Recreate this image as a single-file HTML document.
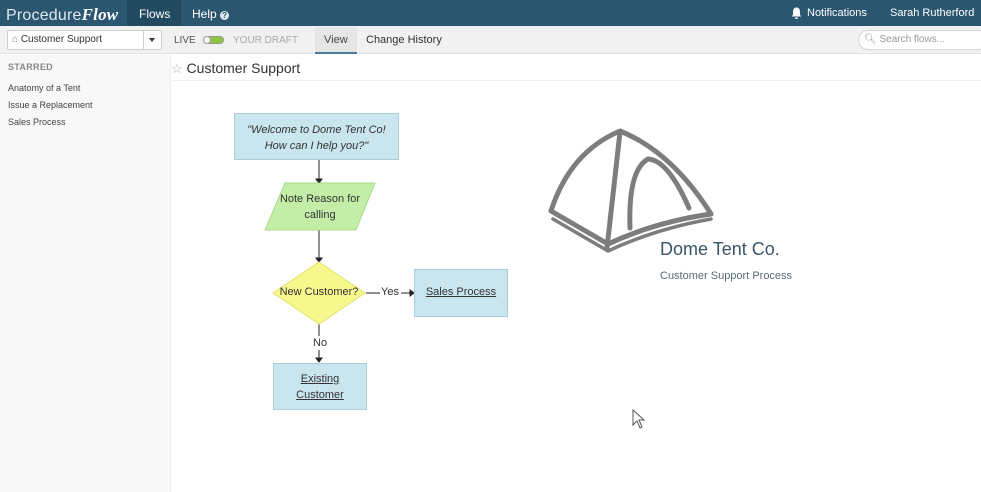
<!DOCTYPE html>
<html><head><meta charset="utf-8"><style>
*{margin:0;padding:0;box-sizing:border-box}
body{width:981px;height:492px;overflow:hidden;background:#fff;font-family:"Liberation Sans",sans-serif;position:relative}
.a{position:absolute}
#top{left:0;top:0;width:981px;height:26px;background:#2b5670}
#bar{left:0;top:26px;width:981px;height:28px;background:#f1f1f1;border-bottom:1px solid #e2e2e2}
#side{left:0;top:55px;width:171px;height:437px;background:#f8f8f8;border-right:1px solid #ececec}
.t{position:absolute;white-space:nowrap}
</style></head><body>
<div id="top" class="a"></div>
<div class="t" style="left:6px;top:5px;font-size:16px;color:#dfe8ee;letter-spacing:0.2px">Procedure<b style="font-family:'Liberation Serif',serif;font-style:italic;font-size:17px;color:#fff">Flow</b></div>
<div class="a" style="left:127px;top:0;width:54px;height:26px;background:#224a61"></div>
<div class="t" style="left:139px;top:7px;font-size:12px;color:#fff">Flows</div>
<div class="t" style="left:192px;top:7px;font-size:12px;color:#fff">Help <span style="display:inline-block;width:9px;height:9px;border-radius:50%;background:#dfe8ee;color:#2b5670;font-size:8px;line-height:9px;text-align:center;font-weight:bold">?</span></div>
<svg class="a" style="left:791px;top:7px" width="11" height="12" viewBox="0 0 11 12"><path d="M5.5 0.5C3 0.5 2 2.5 2 5v3L0.5 9.5h10L9 8V5C9 2.5 8 0.5 5.5 0.5z M4 10.5h3a1.5 1.5 0 0 1-3 0z" fill="#fff"/></svg>
<div class="t" style="left:807px;top:7px;font-size:11px;color:#fff">Notifications</div>
<div class="t" style="left:890px;top:7px;font-size:11px;color:#fff">Sarah Rutherford</div>

<div id="bar" class="a"></div>
<div class="a" style="left:7px;top:30px;width:155px;height:20px;background:#fff;border:1px solid #cfcfcf;border-radius:2px"></div>
<div class="a" style="left:143px;top:30px;width:1px;height:20px;background:#cfcfcf"></div>
<div class="a" style="left:149px;top:38px;border-left:3px solid transparent;border-right:3px solid transparent;border-top:4px solid #333"></div>
<div class="t" style="left:12px;top:34px;font-size:10px;color:#333"><span style="color:#888">⌂</span> Customer Support</div>
<div class="t" style="left:174px;top:35px;font-size:10px;color:#555">LIVE</div>
<div class="a" style="left:203px;top:36px;width:21px;height:8px;border-radius:4px;background:#8cc63f;border:1px solid #999"></div>
<div class="a" style="left:203px;top:36px;width:8px;height:8px;border-radius:50%;background:#fff;border:1px solid #999"></div>
<div class="t" style="left:233px;top:35px;font-size:10px;color:#aaa">YOUR DRAFT</div>
<div class="a" style="left:315px;top:27px;width:42px;height:27px;background:#e6e6e6;border-bottom:2px solid #4a7ea0"></div>
<div class="t" style="left:324px;top:34px;font-size:11px;color:#444">View</div>
<div class="t" style="left:366px;top:34px;font-size:11px;color:#333">Change History</div>
<div class="a" style="left:858px;top:30px;width:130px;height:20px;background:#fff;border:1px solid #d6d6d6;border-radius:10px"></div>
<div class="t" style="left:864px;top:34px;font-size:10px;color:#999">&#x1F50D;&#xFE0E; Search flows...</div>

<div id="side" class="a"></div>
<div class="t" style="left:8px;top:62px;font-size:9px;font-weight:bold;color:#888;letter-spacing:0.3px">STARRED</div>
<div class="t" style="left:8px;top:83px;font-size:9px;color:#444">Anatomy of a Tent</div>
<div class="t" style="left:8px;top:100px;font-size:9px;color:#444">Issue a Replacement</div>
<div class="t" style="left:8px;top:117px;font-size:9px;color:#444">Sales Process</div>

<div class="t" style="left:171px;top:60px;font-size:14px;color:#333"><span style="color:#aaa;font-size:13px">☆</span> Customer Support</div>
<div class="a" style="left:172px;top:80px;width:809px;height:1px;background:#f0f0f0"></div>

<svg class="a" style="left:0;top:0" width="981" height="492">
<g stroke="#222" stroke-width="1" fill="#222">
<line x1="319" y1="159" x2="319" y2="180"/><path d="M316 179h6l-3 4z"/>
<line x1="319" y1="230" x2="319" y2="259"/><path d="M316 258h6l-3 4z"/>
<line x1="366" y1="293" x2="380" y2="293"/><line x1="401" y1="293" x2="411" y2="293"/><path d="M410 290v6l4-3z"/>
<line x1="319" y1="324" x2="319" y2="336"/><line x1="319" y1="350" x2="319" y2="359"/><path d="M316 358h6l-3 4z"/>
</g>
<rect x="234.5" y="113.5" width="164" height="46" fill="#c9e6ef" stroke="#a9cfdb"/>
<polygon points="285,183 375,183 356,230 265,230" fill="#c3eea7" stroke="#a8d98a"/>
<polygon points="319,262 365,293 319,324 273,293" fill="#f6f78c" stroke="#e2e36a"/>
<rect x="414.5" y="269.5" width="93" height="47" fill="#c9e6ef" stroke="#a9cfdb"/>
<rect x="273.5" y="363.5" width="93" height="46" fill="#c9e6ef" stroke="#a9cfdb"/>
<g fill="none" stroke="#7d7d7d" stroke-width="5" stroke-linejoin="round" stroke-linecap="round">
<path d="M551 211 Q570 152 620 131 Q672 152 711 214"/>
<path d="M551 211 L608 244 Q655 222 711 214"/>
<path d="M553 219 L608 251 Q655 229 711 219" stroke-width="3.5"/>
<path d="M620 132 L607 248"/>
<path d="M630 228 Q628 170 648 159 Q668 160 689 208"/>
</g>
<path d="M633 410 L633 425 L637 421 L640 428 L642 427 L639 420 L644 420z" fill="#fff" stroke="#555" stroke-width="1"/>
</svg>
<div class="t" style="left:234px;top:122px;width:165px;text-align:center;font-size:11px;font-style:italic;color:#333;line-height:16px">"Welcome to Dome Tent Co!<br>How can I help you?"</div>
<div class="t" style="left:265px;top:191px;width:110px;text-align:center;font-size:11px;color:#333;line-height:16px">Note Reason for<br>calling</div>
<div class="t" style="left:273px;top:286px;width:92px;text-align:center;font-size:11px;color:#333">New Customer?</div>
<div class="t" style="left:381px;top:286px;font-size:11px;color:#333">Yes</div>
<div class="t" style="left:414px;top:286px;width:94px;text-align:center;font-size:11px;color:#333;text-decoration:underline">Sales Process</div>
<div class="t" style="left:313px;top:337px;font-size:11px;color:#333">No</div>
<div class="t" style="left:273px;top:371px;width:94px;text-align:center;font-size:11px;color:#333;line-height:16px;text-decoration:underline">Existing<br>Customer</div>
<div class="t" style="left:660px;top:239px;font-size:18px;color:#3a5566">Dome Tent Co.</div>
<div class="t" style="left:660px;top:270px;font-size:11px;color:#5a6a74">Customer Support Process</div>
</body></html>
